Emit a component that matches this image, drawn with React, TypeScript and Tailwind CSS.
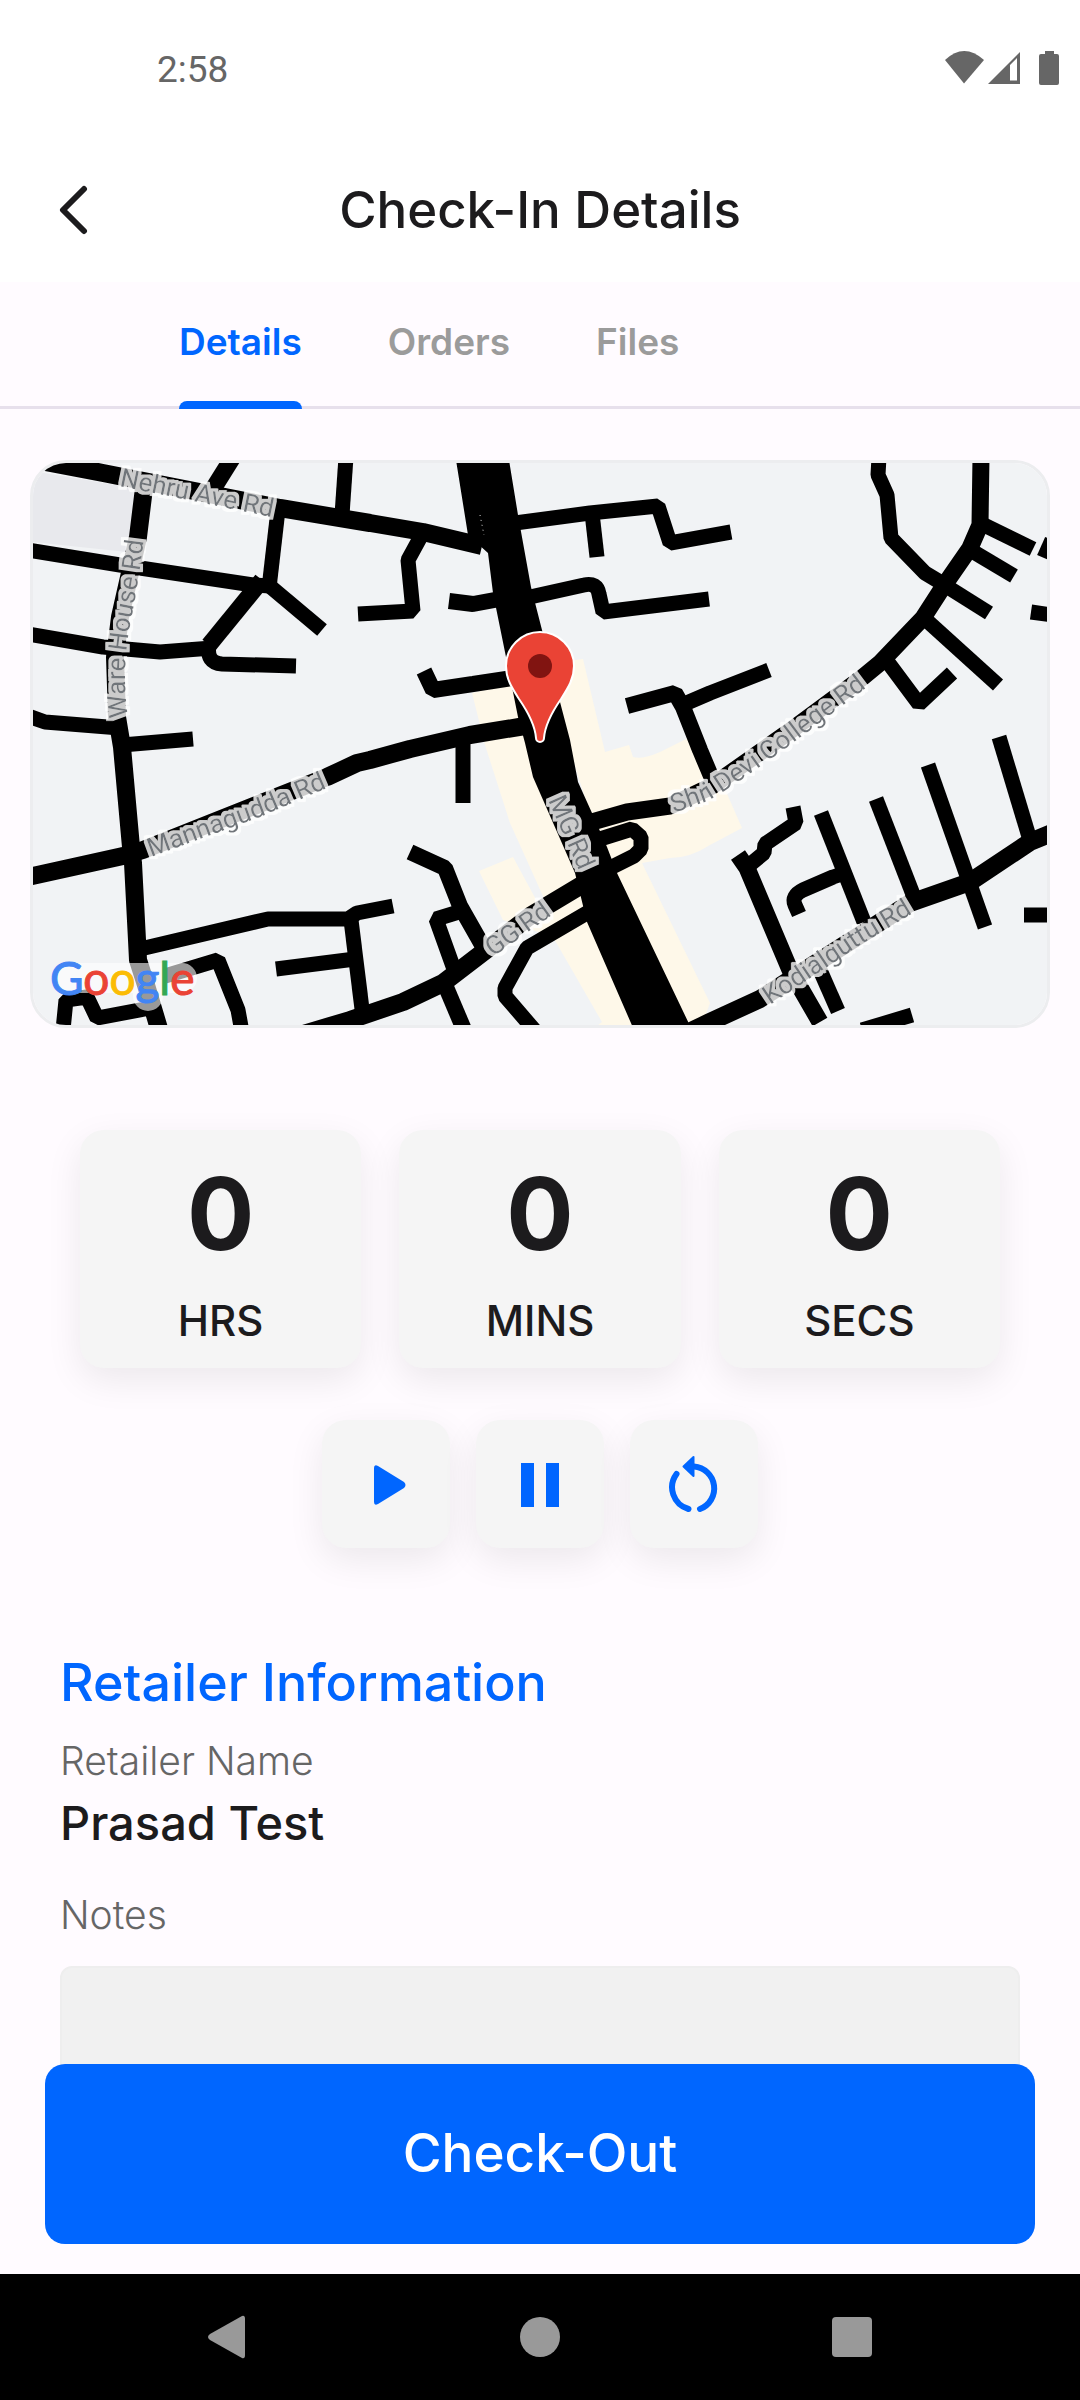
import React from "react";

const blackRoads: { w: number; d: string }[] = [
  { w: 18, d: "M20 457L103 473L280 508L370 523L423 532L482 546" },
  { w: 18, d: "M145 480L138 537L130 573L120 617L115 657L117 717L122 747L131 847L133 863L137 940L138 960L146 985L160 1032" },
  { w: 17, d: "M213 489L233 457" },
  { w: 15, d: "M342 515L346 457" },
  { w: 15, d: "M278 510L269 588" },
  { w: 15, d: "M28 550L120 565L253 585L270 586" },
  { w: 15, d: "M266 583L322 630" },
  { w: 17, d: "M262 580L209 645" },
  { w: 15, d: "M209 645Q206 663 222 664L296 666" },
  { w: 15, d: "M28 634L103 647L160 652L212 648" },
  { w: 15, d: "M28 716L45 722L120 728" },
  { w: 15, d: "M122 745L193 739" },
  { w: 15, d: "M358 614L413 611L408 560L420 538" },
  { w: 15, d: "M515 523L590 513L658 506L670 543L731 532" },
  { w: 15, d: "M592 513L597 557" },
  { w: 15, d: "M530 597L584 585Q597 582 599 594L603 612L709 599" },
  { w: 16, d: "M449 601L473 604L500 599" },
  { w: 16, d: "M424 671L433 690L473 684L512 678" },
  { w: 18, d: "M28 877L123 856L143 850L327 777L357 763L370 760L410 749L470 735L525 726" },
  { w: 15, d: "M463 735V803" },
  { w: 16, d: "M627 706L675 693L683 707L700 750L716 788" },
  { w: 15, d: "M682 705L710 693L769 670" },
  { w: 17, d: "M585 824L627 812L670 806L712 786L790 731L863 677L880 663L923 618L943 587L970 548L980 525L981 457" },
  { w: 15, d: "M879 457L878 475L887 495L891 538L925 573L945 585" },
  { w: 15, d: "M982 524L1033 549" },
  { w: 15, d: "M972 551L1014 576" },
  { w: 15, d: "M946 586L989 613" },
  { w: 15, d: "M924 618L998 685" },
  { w: 15, d: "M887 661L919 704L952 673" },
  { w: 15, d: "M1044 558L1052 540" },
  { w: 15, d: "M1031 612L1052 615" },
  { w: 15, d: "M999 737L1030 840" },
  { w: 18, d: "M670 1041L710 1022L760 999L910 903L970 882L1030 842L1054 832" },
  { w: 15, d: "M876 799L914 897" },
  { w: 15, d: "M928 765L985 927" },
  { w: 15, d: "M821 813L864 922" },
  { w: 15, d: "M845 873L833 877L803 890Q791 896 795 905L799 914" },
  { w: 15, d: "M793 807L796 823L765 844L764 853L747 867" },
  { w: 17, d: "M738 855L747 868L790 970L820 1022" },
  { w: 15, d: "M820 970L838 1011" },
  { w: 15, d: "M862 1030L912 1015" },
  { w: 15, d: "M1024 915H1052" },
  { w: 15, d: "M136 950L268 919H348L357 913L393 906" },
  { w: 15, d: "M351 920L363 1017" },
  { w: 15, d: "M276 969L355 959" },
  { w: 18, d: "M290 1038L350 1020L403 1002L443 983L490 947L530 916L590 880" },
  { w: 16, d: "M410 852L445 868L460 906L485 950" },
  { w: 15, d: "M462 911L436 919L455 972" },
  { w: 16, d: "M443 980L465 1032" },
  { w: 15, d: "M592 910L527 948L505 988V996L536 1032" },
  { w: 15, d: "M600 839L632 829L641 837V849L634 856L606 870" },
  { w: 15, d: "M165 976L218 960L238 1010L242 1032" },
  { w: 15, d: "M63 1030L66 1000L87 997L97 1018L150 1008" },
];

const roadLabels: { id: string; d: string; text: string }[] = [
  { id: "nehru", d: "M119 486L300 523", text: "Nehru Ave Rd" },
  { id: "ware", d: "M128 717Q121 670 131 620Q140 575 146 520L150 480", text: "Ware House Rd" },
  { id: "mannagudda", d: "M151 857L260 817L380 765", text: "Mannagudda Rd" },
  { id: "shri", d: "M674 813L708 801Q740 782 790 745L910 655", text: "Shri Devi College Rd" },
  { id: "mg", d: "M548 800L592 900", text: "MG Rd" },
  { id: "gg", d: "M493 957L580 895", text: "GG Rd" },
  { id: "kodial", d: "M770 1005L860 945L960 885", text: "Kodialguttu Rd" },
];

function RoadMap() {
  return (
    <svg viewBox="33 463 1014 562" className="block w-full" role="img" aria-label="Map of the retailer's location">
      <defs>
        <filter id="label-halo" filterUnits="userSpaceOnUse" x="33" y="463" width="1014" height="562">
          <feMorphology in="SourceAlpha" operator="dilate" radius="3" result="grown" />
          <feFlood floodColor="#fff" floodOpacity="0.8" />
          <feComposite in2="grown" operator="in" result="halo" />
          <feMerge>
            <feMergeNode in="halo" />
            <feMergeNode in="SourceGraphic" />
          </feMerge>
        </filter>
      </defs>
      <rect x="33" y="463" width="1014" height="562" fill="#f1f3f5" />
      <path d="M33 471L145 490L127 552L33 542Z" fill="#e8e9ed" />
      <g fill="#fef8e9">
        <path d="M472 693L530 680L610 860L590 905L547 905L510 823L485 745Z" />
        <path d="M479 871L513 857L540 907L600 885L660 1030H592L602 1022L553 937L503 920Z" />
        <path d="M560 662L583 659L605 752L629 745L633 757Q642 760 660 752L700 732L742 828L710 845Q690 858 670 858L642 863L710 1003L700 1030H660L560 720Z" />
      </g>
      <path
        d="M456 460L468 535L488 553L493 593L506 657L518 717L525 743L533 777L575 873L587 922L634 1030H692L617 873L607 847L592 813L578 782L570 740L560 702L542 630L531 587L518 515L509 460Z"
        fill="#000"
      />
      <g fill="none" stroke="#000" strokeLinejoin="bevel">
        {blackRoads.map((r) => (
          <path key={r.d} d={r.d} strokeWidth={r.w} />
        ))}
      </g>
      <path d="M480 515L484 535" stroke="#ddd" strokeWidth="1" strokeDasharray="1 4" />
      <g fontFamily="Roboto, sans-serif" fontSize="26" fill="#70757a" filter="url(#label-halo)">
        {roadLabels.map((l) => (
          <React.Fragment key={l.id}>
            <path id={l.id} d={l.d} fill="none" />
            <text>
              <textPath href={`#${l.id}`}>{l.text}</textPath>
            </text>
          </React.Fragment>
        ))}
      </g>
      <path
        d="M540 632a34 34 0 0 0-34 34c0 13 6 22 13 33 9 13 16 26 17 39a4 4 0 0 0 8 0c1-13 8-26 17-39 7-11 13-20 13-33a34 34 0 0 0-34-34Z"
        fill="#ea4335"
        stroke="#fff"
        strokeWidth="2"
      />
      <circle cx="540" cy="666" r="12" fill="#811411" />
      <path
        d="M69 978H182M148 978V996"
        fill="none"
        stroke="#fff"
        strokeOpacity="0.6"
        strokeWidth="30"
        strokeLinecap="round"
        strokeLinejoin="round"
      />
      <text x="50" y="995" fontFamily="Lato, sans-serif" fontSize="46" strokeWidth="1">
        <tspan fill="#4285f4" stroke="#4285f4">G</tspan>
        <tspan fill="#ea4335" stroke="#ea4335">o</tspan>
        <tspan fill="#fbbc04" stroke="#fbbc04">o</tspan>
        <tspan fill="#4285f4" stroke="#4285f4">g</tspan>
        <tspan fill="#34a853" stroke="#34a853">l</tspan>
        <tspan fill="#ea4335" stroke="#ea4335">e</tspan>
      </text>
    </svg>
  );
}

function StatusBar() {
  return (
    <div className="flex h-[138px] items-center justify-between pr-5 pl-[157px] text-[#666]">
      <span className="pt-0.5 font-[Roboto,sans-serif] text-[37px]">2:58</span>
      <svg viewBox="0 0 116 36" className="h-9 w-[116px]" fill="currentColor" aria-hidden="true">
        <path d="M20 32.5L1 9Q20-9 40 9Z" />
        <path d="M44 33L76 1V33ZM66 14V29.5H73V7Z" fillRule="evenodd" />
        <path d="M101 0h9v3h3q2 0 2 2v27q0 2-2 2h-16q-2 0-2-2V5q0-2 2-2h4Z" />
      </svg>
    </div>
  );
}

function Counter({ value, unit }: { value: number; unit: string }) {
  return (
    <div className="flex h-[238px] flex-col items-center rounded-3xl bg-[#f5f5f5] pt-[34px] shadow-[0_12px_36px_rgba(0,0,0,0.08)]">
      <span className="text-[100px] leading-[100px] font-bold">{value}</span>
      <span className="mt-[33px] text-[42px] leading-[48px] font-medium">{unit}</span>
    </div>
  );
}

function ControlButton({ label, children }: { label: string; children: React.ReactNode }) {
  return (
    <button
      type="button"
      aria-label={label}
      className="flex size-32 items-center justify-center rounded-3xl bg-[#f5f5f5] text-[#0066ff] shadow-[0_12px_36px_rgba(0,0,0,0.08)]"
    >
      {children}
    </button>
  );
}

export default function App() {
  return (
    <div className="flex min-h-screen flex-col bg-[#fffbff] font-[Inter,sans-serif] text-[#1c1b1d]">
      <header className="bg-white">
        <StatusBar />
        <div className="grid h-36 grid-cols-[120px_1fr_120px] items-center">
          <button type="button" aria-label="Back" className="flex h-16 items-center pl-[58px]">
            <svg viewBox="0 0 30 50" className="h-[50px] w-[30px]" fill="none" stroke="currentColor" strokeWidth="6" strokeLinecap="round" strokeLinejoin="round">
              <path d="M26 4L5 25L26 46" />
            </svg>
          </button>
          <h1 className="text-center text-[51px] font-medium">Check-In Details</h1>
        </div>
      </header>

      <nav className="flex h-[127px] items-stretch gap-[86px] border-b-3 border-[#e7e0ec] px-[179px] text-[37px] font-semibold text-[#9b9b9b]">
        <button type="button" aria-current="page" className="relative pb-1 text-[#0066ff]">
          Details
          <span className="absolute inset-x-0 -bottom-[3px] h-2 rounded-t-lg bg-[#0066ff]" />
        </button>
        <button type="button" className="pb-1">Orders</button>
        <button type="button" className="pb-1">Files</button>
      </nav>

      <main className="flex flex-col">
        <section className="mx-[30px] mt-[51px] overflow-hidden rounded-[36px] border-3 border-[#ecedef]">
          <RoadMap />
        </section>

        <section aria-label="Timer" className="mt-[102px]">
          <div className="grid grid-cols-3 gap-[38px] px-20">
            <Counter value={0} unit="HRS" />
            <Counter value={0} unit="MINS" />
            <Counter value={0} unit="SECS" />
          </div>
          <div className="mt-[52px] flex justify-center gap-[26px]">
            <ControlButton label="Start">
              <svg viewBox="0 0 40 48" className="h-12 w-10" fill="currentColor">
                <path d="M8 8Q8 4 12 6L38 22Q41 25 38 28L12 44Q8 46 8 42Z" />
              </svg>
            </ControlButton>
            <ControlButton label="Pause">
              <svg viewBox="0 0 40 48" className="h-12 w-10" fill="currentColor">
                <path d="M1 3h13v44H1zM26 3h13v44H26z" />
              </svg>
            </ControlButton>
            <ControlButton label="Reset">
              <svg viewBox="0 0 52 58" className="h-[58px] w-[52px]" fill="none" stroke="currentColor" strokeWidth="6" strokeLinecap="round">
                <path d="M8.500 19A22.500 22.500 0 0 0 20.500 54" />
                <path d="M26 11.500A22 22 0 0 1 32 54" />
                <path d="M25.500 2V21L15.500 11.500Z" fill="currentColor" strokeWidth="2" strokeLinejoin="round" />
              </svg>
            </ControlButton>
          </div>
        </section>

        <section className="mt-[103px] flex flex-col px-[60px]">
          <h2 className="text-[52px] leading-[64px] font-medium text-[#0066ff]">Retailer Information</h2>
          <p className="mt-[22px] text-[39px] leading-[48px] font-light text-[#666]">Retailer Name</p>
          <p className="mt-2 text-[47px] leading-[60px] font-medium">Prasad Test</p>
          <label htmlFor="notes" className="mt-[38px] text-[39px] leading-[48px] font-light text-[#666]">
            Notes
          </label>
          <textarea id="notes" className="mt-[27px] h-32 resize-none rounded-xl border-2 border-[#eeeeee] bg-[#f1f1f1] p-6 text-[39px]" />
        </section>
      </main>

      <div className="relative -mt-[30px] px-[45px] pb-[30px]">
        <button type="button" className="h-[180px] w-full rounded-[20px] bg-[#0066ff] text-[53px] font-medium text-white">
          Check-Out
        </button>
      </div>

      <nav aria-label="System" className="mt-auto flex h-[126px] items-center justify-between bg-black px-[208px] text-[#999]">
        <button type="button" aria-label="System back">
          <svg viewBox="0 0 40 44" className="h-11 w-10" fill="currentColor">
            <path d="M34 1Q37 0 37 4V40Q37 44 34 43L2 25Q-2 22 2 19Z" />
          </svg>
        </button>
        <button type="button" aria-label="Home" className="size-10 rounded-full bg-current" />
        <button type="button" aria-label="Recent apps" className="size-10 rounded bg-current" />
      </nav>
    </div>
  );
}
